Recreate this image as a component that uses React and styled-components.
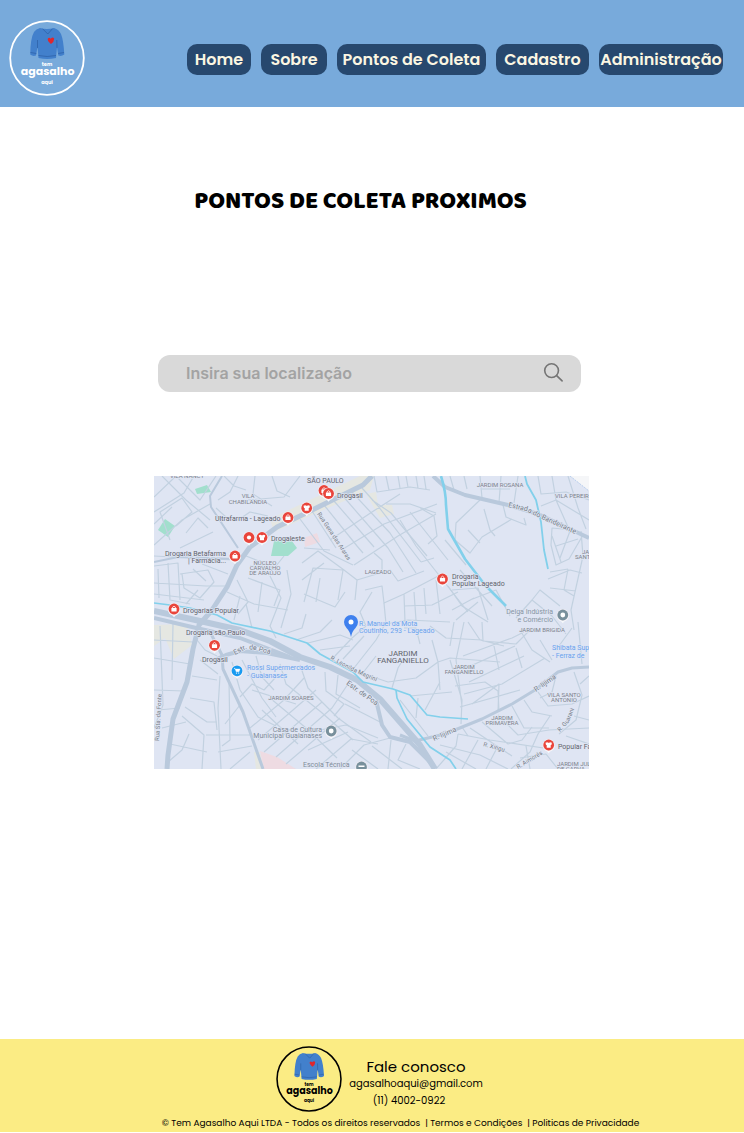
import React from "react";
import styled, { createGlobalStyle } from "styled-components";

const GlobalStyle = createGlobalStyle`
  *, *::before, *::after { box-sizing: border-box; }
  body {
    margin: 0;
    background: #ffffff;
    color: #000000;
    font-family: Poppins, Inter, "Liberation Sans", sans-serif;
  }
`;

const Header = styled.header`
  display: flex;
  align-items: flex-start;
  justify-content: space-between;
  gap: 16px;
  min-height: 107px;
  padding: 20px 21px 11px 9px;
  background: #78aadb;
`;

const LogoLink = styled.a`
  flex: none;
  line-height: 0;
`;

const Nav = styled.nav`
  display: flex;
  flex-wrap: wrap;
  justify-content: flex-end;
  gap: 10px;
  margin-top: 24px;
`;

const NavLink = styled.a`
  display: flex;
  align-items: center;
  justify-content: center;
  width: ${(p) => p.$width}px;
  height: 31px;
  border-radius: 10px;
  background: #27486e;
  color: #fbf6e2;
  font-size: 16px;
  font-weight: 600;
  white-space: nowrap;
  text-decoration: none;
`;

const Main = styled.main`
  display: flex;
  flex-direction: column;
  width: 100%;
  max-width: 436px;
  margin: 0 auto;
  padding: 79px 1px 270px 0;
`;

const Title = styled.h1`
  margin: 0;
  padding-right: 22px;
  text-align: center;
  font-family: "Baloo 2", Lato, "Open Sans", sans-serif;
  font-size: 24px;
  line-height: 32px;
  font-weight: 900;
`;

const Search = styled.form`
  display: flex;
  align-items: center;
  height: 37px;
  margin: 137px 8px 84px 4px;
  padding: 0 17px 2px 28px;
  border-radius: 12px;
  background: #d9d9d9;
`;

const SearchInput = styled.input`
  flex: 1;
  min-width: 0;
  padding: 0;
  border: 0;
  outline: 0;
  background: transparent;
  color: #555555;
  font-family: Inter, sans-serif;
  font-size: 16px;
  font-weight: 600;
  &::placeholder { color: #a3a3a3; opacity: 1; }
`;

const SearchButton = styled.button`
  display: flex;
  padding: 0;
  border: 0;
  background: none;
  color: #757575;
  cursor: pointer;
`;

const MapSvg = styled.svg`
  display: block;
  width: 100%;
  height: auto;
  font-family: Roboto, sans-serif;
`;

const Footer = styled.footer`
  display: flex;
  flex-direction: column;
  align-items: center;
  min-height: 93px;
  padding: 7px 16px 1px;
  background: #fbec84;
`;

const Contact = styled.div`
  display: flex;
  gap: 7px;
  margin-left: 15px;
`;

const ContactText = styled.address`
  display: flex;
  flex-direction: column;
  align-items: center;
  padding-top: 13px;
  font-style: normal;
  font-size: 10px;
  line-height: 17px;
`;

const ContactTitle = styled.h2`
  margin: 0;
  font-size: 15px;
  line-height: 16px;
  font-weight: 400;
`;

const PlainLink = styled.a`
  color: inherit;
  text-decoration: none;
`;

const Phone = styled(PlainLink)`
  padding-right: 14px;
`;

const Legal = styled.p`
  display: flex;
  flex-wrap: wrap;
  justify-content: center;
  margin: 4px 0 0 57px;
  font-size: 9px;
  line-height: 14px;
  white-space: pre-wrap;
`;

function Logo({ size, ink }) {
  return (
    <svg width={size} height={size} viewBox="0 0 76 76" role="img" aria-label="Tem Agasalho Aqui">
      <circle cx="38" cy="38" r="36.8" fill="none" stroke={ink} strokeWidth="1.8" />
      <path
        d="M31 8 Q38 10 45 8 Q50 9.5 52 14 Q54.5 20 55.3 34.5 Q52.5 36.8 49.3 35.5 L48 27 L47 38 Q38 40 29.5 38 L28.5 27 L27 35.5 Q24 36.8 21.2 34.5 Q21.5 18 25 12 Q27 9 31 8 Z"
        fill="#4280cc"
      />
      <path
        d="M33.5 8.7 L38.8 14 L43.5 8.7 M29.5 35.5 Q38 37.5 47 35.5 M28.5 20 L28.5 28 M47.8 20 L48 28 M21.5 32.5 L27.3 33.5 M49.2 33.5 L55 32.5"
        fill="none"
        stroke="#2f62a8"
        strokeWidth="0.8"
      />
      <path
        d="M42 24 Q38.2 21 38.8 18.8 Q40 16.8 41.7 18.8 Q43.8 16.4 45.2 18.8 Q45.2 21.7 42 24 Z"
        fill="#e0262d"
      />
      <g fill={ink} textAnchor="middle" fontFamily="Poppins, sans-serif" fontWeight="700">
        <text x="38" y="46.4" fontSize="5">tem</text>
        <text x="38.6" y="55.3" fontSize="11">agasalho</text>
        <text x="38" y="64" fontSize="5">aqui</text>
      </g>
    </svg>
  );
}

const minorRoads = [
  // north-west
  "M154 497 L176 476 M154 512 L184 493 L194 476 M162 476 L186 500 L210 520 M176 476 L200 500 L216 476",
  "M154 545 L182 520 L210 504 M170 540 L160 512 L182 498 L192 512 L176 526 M186 533 L198 518 L208 528",
  "M154 556 L210 559 L235 560 M154 524 L172 507 M180 548 L213 532 M224 476 L234 486 L246 490 M238 476 L230 492 L218 500",
  "M154 566 L178 563 L180 600 M168 563 L170 600 L190 604 M180 574 L208 570 L214 582 L200 598 L184 588 L182 574 M193 569 L206 581 M202 564 L228 574",
  "M154 583 L206 586 L226 586 M154 594 L204 600 M186 604 L198 590 M158 569 L159 598",
  "M238 520 L250 512 L268 516 M216 508 L226 517 M255 476 L253 494 L272 506 M272 476 L277 491 L290 497 M248 500 L284 497 L300 476",
  "M246 556 L264 563 L277 571 M250 566 L276 566 L284 556 M248 578 L280 590 L274 606 M237 580 L248 602 L238 614 M227 592 L254 604 L288 610",
  "M240 596 L234 620 M246 604 L252 628 M262 582 L258 612 M270 576 L281 598 L270 626 L276 638 M287 570 L291 594 L281 628",
  // Lageado
  "M300 519 L324 551 L353 565 M312 511 L336 548 M324 505 L357 546 L363 553 M334 501 L374 547 M342 495 L388 548 L403 572 M350 490 L390 533 L416 573",
  "M362 488 L378 506 L421 562 M372 500 L391 513 L427 556 M330 540 L372 512 L400 494 M343 549 L384 524 L437 504 M354 565 L398 536 L436 514",
  "M400 520 L416 546 L442 579 L468 612 M410 512 L448 560 M420 508 L434 516 L437 536 L428 544 M421 562 L434 558 M386 504 L410 504 L436 513",
  "M304 548 L330 550 M302 563 L318 551 L344 570 L357 580 L355 600 M302 580 L324 563 M304 602 L313 568 L343 570 L338 600 M304 594 L335 607 L345 592 M320 578 L316 602",
  "M357 580 L390 570 L398 581 L424 571 M365 590 L382 586 L384 603 L404 594 L442 574 M404 594 L405 622 M372 592 L360 612 L366 626 M382 570 L382 560 L374 553",
  "M384 603 L386 624 L408 620 L450 622 M404 606 L432 605 L458 592 M414 592 L416 620 M424 588 L426 614 M436 580 L440 614 M448 586 L462 606 L488 622",
  "M374 476 L377 492 L410 487 L430 490 M386 476 L389 490 M398 476 L400 488 M406 476 L408 487 M416 476 L418 488 M424 476 L426 489",
  "M445 540 L466 565 M452 590 L478 588 L488 620 M460 570 L492 606 M470 600 L496 590 L510 616 M452 610 L474 598 M456 620 L478 602",
  // north-east
  "M480 500 L456 523 L455 540 L470 553 L482 537 L512 519 M484 509 L490 530 L495 536 M503 505 L506 517 L526 525 L524 518 M480 543 L468 530",
  "M450 476 L454 490 L465 494 M464 476 L467 489 M480 476 L482 498 M501 476 L499 503 M518 476 L514 503 M482 489 L510 489 M538 476 L541 494 L566 492 L589 500",
  "M552 476 L556 500 L568 527 M568 476 L578 508 L586 529 M541 506 L556 500 L589 520 M573 530 L552 528 L551 545 L556 565 L569 559 L583 535 M556 546 L578 539 M561 562 L552 536 M570 531 L560 558",
  "M581 531 L583 556 L571 610 L574 630 M548 579 L570 570 L582 573 M550 572 L568 569 M568 569 L564 590 L574 596 M550 588 L576 591 M516 618 L532 600 L552 616 L566 634 M532 600 L540 590 L560 606",
  // south-west
  "M154 640 L193 642 M154 658 L190 664 M160 626 L163 705 L154 728 M173 624 L172 680 M154 690 L184 691 M158 710 L180 708 M162 728 L186 722 M170 744 L207 752 M168 762 L182 750 L189 734",
  "M197 640 L205 650 L217 656 M200 660 L218 674 M192 676 L217 680 M190 698 L214 702 L217 730 M185 707 L207 722 L217 722 M182 716 L204 735 L202 769 M220 676 L218 708 L221 769 M229 680 L230 740 L222 746",
  "M206 735 L250 735 M240 705 L225 724 M232 662 L240 690 L258 717 L276 726 M242 660 L262 698 L276 717 M256 656 L262 677 L274 690 M252 690 L296 704 M240 697 L252 684 L264 690 L275 678",
  "M218 752 L252 746 M230 769 L250 752 M250 728 L284 700 L304 678 M258 740 L293 710 L316 690 M264 752 L322 702 M276 757 L332 708 L348 684 M286 764 L340 718",
  "M280 664 L286 684 L321 712 L353 740 M300 665 L308 688 L338 718 L371 742 M270 698 L306 728 L337 758 M262 710 L298 744 M325 672 L326 691 L344 704 L334 716 M338 675 L336 694 L360 708 M345 704 L382 723",
  "M320 730 L346 725 L378 738 M308 750 L348 732 M316 769 L351 739 L378 744 M340 769 L364 745 L390 738 M352 750 L378 769 M372 746 L402 769 M391 740 L388 769 M406 744 L398 760 L420 769",
  // centre
  "M284 634 L302 628 L306 614 M296 640 L320 632 L332 620 M308 643 L340 635 L353 640 M320 650 L350 646 M334 657 L352 638 L366 626 M343 659 L364 636 M354 668 L376 640 L384 626 M362 674 L376 656",
  "M364 674 L388 682 L416 678 L438 662 L450 658 L500 662 M392 688 L398 668 L404 658 M410 696 L452 692 M400 700 L428 736 M418 698 L416 718 M425 710 L440 682 M438 662 L440 690 M432 640 L438 662 M450 646 L454 622",
  "M404 628 L416 628 L420 644 M430 626 L446 638 L482 640 M450 660 L462 700 L461 724 M464 622 L456 660 L462 706 M468 622 L480 640 L504 646 M482 622 L483 641 L516 644 L530 630",
  "M463 656 L512 638 L524 632 M466 668 L515 646 M469 682 L524 656 M464 694 L502 684 L545 658 M472 704 L499 684 L498 712 M455 686 L485 682 L498 691 L499 712 M460 707 L520 690 M520 630 L532 650 L550 662 M494 646 L499 670 M516 648 L522 668",
  // south-east
  "M512 706 L524 728 L549 728 M498 715 L518 735 L549 730 L589 728 M482 722 L508 744 L522 740 L532 727 M470 728 L512 756 M458 734 L490 740 L550 749 M440 745 L480 755 L508 769 M446 752 L476 769 M436 769 L456 746 L458 734",
  "M524 700 L532 712 L552 716 M538 692 L548 706 L572 704 L589 696 M556 676 L552 692 L540 698 M574 672 L582 695 L576 720 L559 734 M589 676 L580 684 M552 660 L540 640 M578 622 L582 664 M572 628 L556 650 M550 716 L538 734 L530 752 L511 769",
  "M566 736 L589 744 M520 758 L546 754 L558 769 M574 716 L589 720 M478 740 L462 769 M498 746 L486 769 M526 746 L530 769 M462 727 L468 736",
];

const arteries = [
  { d: "M372 476 L363 485 L300 516 L277 527 L250 547 L237 565 L227 587 L212 610 L199 625 L193 649 L187 682 L173 719 L168 755 L167 769", w: 5 },
  { d: "M154 611 L200 621 L240 630 L270 641 L300 657 L330 667 L357 680 L380 699 L400 722 L420 745 L435 769", w: 6 },
  { d: "M154 618 L192 627 L240 638 L290 657", w: 4 },
  { d: "M210 662 L226 655 L240 651 L267 653 L300 660", w: 4 },
  { d: "M210 632 L222 655 L223 669 L243 712 L263 769", w: 3 },
  { d: "M376 700 L382 725 L390 737 L410 742 L433 765", w: 4 },
  { d: "M433 476 L445 487 L465 495 L508 505 L538 514 L572 530 L589 538", w: 4 },
  { d: "M400 735 L415 741 L445 734 L482 719 L512 704 L535 690 L558 672 L572 668 L589 667", w: 3 },
  { d: "M154 562 L178 557 L235 559 M222 476 L210 496 L211 507 L238 548", w: 2 },
];

const rivers = [
  { d: "M154 603 L170 605 L190 608 L217 615 L232 623 L270 631 L307 643 L320 654 L353 672 L363 682 L393 689 L410 695 L427 715 L440 717 L468 719", w: 1.7 },
  { d: "M396 690 L397 698 L407 719 L430 747 L450 760 L456 769", w: 1.7 },
  { d: "M441 476 Q446 492 446 505 L448 529 L465 559 L485 585 L506 606", w: 2.6 },
  { d: "M525 476 L527 484 L536 500 L541 522 L544 550 L548 569", w: 1.8 },
];

const BLUE = "#69a2ee";
const SLATE = "#7f8c99";
const AREA = "#7d838c";

const labels = [
  { x: 307, y: 483, t: "SÃO PAULO", s: 7 },
  { x: 337, y: 498, t: "Drogasil", s: 7 },
  { x: 215, y: 521, t: "Ultrafarma - Lageado", s: 7 },
  { x: 271, y: 541, t: "Drogaleste", s: 7 },
  { x: 226, y: 556, t: "Drogaria Betafarma", s: 7, a: "end" },
  { x: 226, y: 563, t: "| Farmácia...", s: 7, a: "end" },
  { x: 183, y: 613, t: "Drogarias Popular", s: 7 },
  { x: 452, y: 579, t: "Drogaria", s: 7 },
  { x: 452, y: 586, t: "Popular Lageado", s: 7 },
  { x: 186, y: 635, t: "Drogaria são Paulo", s: 7 },
  { x: 202, y: 662, t: "Drogasil", s: 7 },
  { x: 558, y: 749, t: "Popular Fa", s: 7 },
  { x: 247, y: 670, t: "Rossi Supermercados", s: 7, c: BLUE },
  { x: 247, y: 678, t: "- Guaianases", s: 7, c: BLUE },
  { x: 359, y: 626, t: "R. Manuel da Mota", s: 7, c: BLUE },
  { x: 359, y: 633, t: "Coutinho, 293 - Lageado", s: 7, c: BLUE },
  { x: 552, y: 650, t: "Shibata Sup", s: 7, c: BLUE },
  { x: 552, y: 658, t: "- Ferraz de", s: 7, c: BLUE },
  { x: 553, y: 614, t: "Delga Indústria", s: 7, a: "end", c: "#8795a3" },
  { x: 553, y: 622, t: "e Comércio", s: 7, a: "end", c: "#8795a3" },
  { x: 322, y: 732, t: "Casa de Cultura", s: 7, a: "end", c: SLATE },
  { x: 322, y: 738, t: "Municipal Guaianases", s: 7, a: "end", c: SLATE },
  { x: 303, y: 767, t: "Escola Técnica", s: 7, c: SLATE },
  { x: 403, y: 656, t: "JARDIM", s: 8, a: "middle" },
  { x: 403, y: 663, t: "FANGANIELLO", s: 8, a: "middle" },
  { x: 187, y: 478, t: "VILA NANCY", s: 6, a: "middle", c: AREA },
  { x: 248, y: 498, t: "VILA", s: 6, a: "middle", c: AREA },
  { x: 248, y: 504, t: "CHABILANDIA", s: 6, a: "middle", c: AREA },
  { x: 265, y: 565, t: "NÚCLEO", s: 6, a: "middle", c: AREA },
  { x: 265, y: 570, t: "CARVALHO", s: 6, a: "middle", c: AREA },
  { x: 265, y: 575, t: "DE ARAÚJO", s: 6, a: "middle", c: AREA },
  { x: 378, y: 574, t: "LAGEADO", s: 6, a: "middle", c: AREA },
  { x: 500, y: 487, t: "JARDIM ROSANA", s: 6, a: "middle", c: AREA },
  { x: 555, y: 498, t: "VILA PEREIR", s: 6, c: AREA },
  { x: 582, y: 554, t: "JA", s: 6, c: AREA },
  { x: 575, y: 559, t: "SANT", s: 6, c: AREA },
  { x: 542, y: 632, t: "JARDIM BRIGIDA", s: 6, a: "middle", c: AREA },
  { x: 464, y: 669, t: "JARDIM", s: 6, a: "middle", c: AREA },
  { x: 464, y: 674, t: "FANGANIELLO", s: 6, a: "middle", c: AREA },
  { x: 564, y: 697, t: "VILA SANTO", s: 6, a: "middle", c: AREA },
  { x: 564, y: 702, t: "ANTONIO", s: 6, a: "middle", c: AREA },
  { x: 502, y: 720, t: "JARDIM", s: 6, a: "middle", c: AREA },
  { x: 502, y: 725, t: "PRIMAVERA", s: 6, a: "middle", c: AREA },
  { x: 291, y: 700, t: "JARDIM SOARES", s: 6, a: "middle", c: AREA },
  { x: 557, y: 766, t: "JARDIM JUL", s: 6, c: AREA },
  { x: 557, y: 771, t: "DE CARVA", s: 6, c: AREA },
];

const streetLabels = [
  { id: "bandeirante", d: "M508 507 L526 511 L546 521 L582 537", t: "Estrada do Bandeirante", s: 7 },
  { id: "gena", d: "M317 514 L333 538 L354 570", t: "Rua Gena das Araras", s: 6 },
  { id: "poa-oeste", d: "M235 655 L246 649 L256 650 L276 656", t: "Estr. de Poá", s: 7 },
  { id: "poa-leste", d: "M346 684 L358 693 L384 711", t: "Estr. de Poá", s: 7 },
  { id: "leonilda", d: "M330 659 L350 670 L384 685", t: "R. Leonilda Magrini", s: 6 },
  { id: "iijima-leste", d: "M536 692 L562 674", t: "R. Iijima", s: 7 },
  { id: "iijima-oeste", d: "M434 741 L464 728", t: "R. Iijima", s: 7 },
  { id: "guarani", d: "M560 732 L569 722 L578 700", t: "R. Guarani", s: 6 },
  { id: "xingu", d: "M483 746 L512 754", t: "R. Xingu", s: 6 },
  { id: "aimores", d: "M518 769 L546 752", t: "R. Aimorés", s: 6 },
  { id: "fonte", d: "M159 741 L162 688", t: "Rua Sta. da Fonte", s: 6 },
];

const pins = [
  { x: 324, y: 490.5, kind: "bag" },
  { x: 328.5, y: 493.5, kind: "bag" },
  { x: 306.7, y: 508, kind: "shirt" },
  { x: 288, y: 517.5, kind: "bag" },
  { x: 249, y: 537.5, kind: "dot" },
  { x: 262, y: 537.5, kind: "shirt" },
  { x: 235, y: 556, kind: "bag" },
  { x: 174, y: 609, kind: "bag" },
  { x: 442.5, y: 579, kind: "bag" },
  { x: 214.5, y: 645.3, kind: "bag" },
  { x: 548.7, y: 745, kind: "shirt" },
  { x: 237, y: 670.8, kind: "cart", color: "#199bf1" },
  { x: 562.8, y: 615, kind: "ring", color: "#78909c" },
  { x: 331.2, y: 731, kind: "ring", color: "#78909c" },
  { x: 361.5, y: 767, kind: "school", color: "#78909c" },
];

function PinGlyph({ kind }) {
  if (kind === "bag")
    return (
      <>
        <rect x="-2.6" y="-1" width="5.2" height="3.6" rx="0.5" fill="#fff" />
        <path d="M-1.4 -0.8 V-1.8 Q0 -3.8 1.4 -1.8 V-0.8" fill="none" stroke="#fff" strokeWidth="0.8" />
      </>
    );
  if (kind === "shirt")
    return <path d="M-3.2 -2.2 L-1.3 -2.8 Q0 -1.8 1.3 -2.8 L3.2 -2.2 L2.7 0 H2 V2.8 H-2 V0 H-2.7 Z" fill="#fff" />;
  if (kind === "cart")
    return (
      <>
        <path d="M-3 -2.4 H-2 L-0.8 1 H2 L3 -1.7 H-1.7 Z" fill="#fff" stroke="#fff" strokeWidth="0.4" />
        <circle cx="-0.5" cy="2.3" r="0.6" fill="#fff" />
        <circle cx="1.7" cy="2.3" r="0.6" fill="#fff" />
      </>
    );
  if (kind === "school") return <path d="M-3 -1.5 H3 V0 H-3 Z" fill="#fff" />;
  return <circle r={kind === "dot" ? 2.1 : 2.4} fill="#fff" />;
}

function Pin({ x, y, kind, color = "#e9453b" }) {
  return (
    <g transform={`translate(${x} ${y})`}>
      <path d="M-6.2 1 Q-5 5.5 -1.5 6.5 L0 8.3 L1.5 6.5 Q5 5.5 6.2 1 Z" fill="#f6f8fb" />
      <circle r="6.1" fill="#f3eef3" />
      <circle r="5.4" fill={color} />
      <PinGlyph kind={kind} />
    </g>
  );
}

function CollectionMap() {
  return (
    <MapSvg viewBox="154 476 435 293" role="img" aria-label="Mapa dos pontos de coleta">
      <rect x="154" y="476" width="435" height="293" fill="#dfe5f3" />
      <path d="M570 476 H589 V491 Z" fill="#f5f6f8" />
      <path d="M570 476 L589 491" stroke="#a9c4ea" strokeWidth="0.8" strokeDasharray="2 1" />
      <g fill="#e5e7e2">
        <path d="M270 519 L360 476 L374 476 L370 490 L314 514 L274 532 Z" />
        <path d="M366 494 L376 492 L378 505 L392 505 L394 514 L380 518 Z" />
        <path d="M154 625 L187 624 L192 645 L174 659 L165 638 L154 646 Z" />
        <path d="M254 752 L260 752 L264 769 L256 769 Z" />
      </g>
      <g fill="#a2dfcd">
        <path d="M165 519 L175 526 L168 537 L158 530 Z" />
        <path d="M195 489 L207 485 L211 492 L197 494 Z" />
        <path d="M274 541 L289 537 L297 548 L288 556 L271 556 Z" />
      </g>
      <g fill="#eedbe2">
        <path d="M304 538 L317 533 L320 542 L305 547 Z" />
        <path d="M260 751 L277 757 L296 769 L264 769 Z" />
      </g>
      <g fill="none" strokeLinejoin="round">
        {minorRoads.map((d) => (
          <path key={d} d={d} stroke="#c2d1e0" strokeWidth="1.2" />
        ))}
        {arteries.map((r) => (
          <path key={r.d} d={r.d} stroke="#b9c9dc" strokeWidth={r.w} />
        ))}
        {rivers.map((r) => (
          <path key={r.d} d={r.d} stroke="#82d0eb" strokeWidth={r.w} />
        ))}
      </g>
      <g stroke="#dfe5f3" strokeWidth="1.4" paintOrder="stroke" strokeLinejoin="round">
        {labels.map((l) => (
          <text key={`${l.x}-${l.y}`} x={l.x} y={l.y} fontSize={l.s} textAnchor={l.a || "start"} fill={l.c || "#5f646c"}>
            {l.t}
          </text>
        ))}
        {streetLabels.map((l) => (
          <React.Fragment key={l.id}>
            <path id={l.id} d={l.d} fill="none" stroke="none" />
            <text fontSize={l.s} fill="#747b85">
              <textPath href={`#${l.id}`}>{l.t}</textPath>
            </text>
          </React.Fragment>
        ))}
      </g>
      {pins.map((p) => (
        <Pin key={`${p.x}-${p.y}`} {...p} />
      ))}
      <path d="M351 637 Q349.8 631 346.5 628 Q344 625.5 344 622 A7 7 0 0 1 358 622 Q358 625.5 355.5 628 Q352.2 631 351 637 Z" fill="#3f80ee" />
      <circle cx="351" cy="622" r="2.5" fill="#fff" />
    </MapSvg>
  );
}

const pages = [
  { label: "Home", width: 64 },
  { label: "Sobre", width: 66 },
  { label: "Pontos de Coleta", width: 149 },
  { label: "Cadastro", width: 93 },
  { label: "Administração", width: 124 },
];

export default function App() {
  return (
    <>
      <GlobalStyle />
      <Header>
        <LogoLink href="#inicio">
          <Logo size={76} ink="#ffffff" />
        </LogoLink>
        <Nav>
          {pages.map((p) => (
            <NavLink key={p.label} href="#pagina" $width={p.width}>
              {p.label}
            </NavLink>
          ))}
        </Nav>
      </Header>
      <Main>
        <Title>PONTOS DE COLETA PROXIMOS</Title>
        <Search onSubmit={(e) => e.preventDefault()}>
          <SearchInput type="text" aria-label="Insira sua localização" placeholder="Insira sua localização" />
          <SearchButton type="submit" aria-label="Buscar">
            <svg width="21" height="21" viewBox="0 0 22 22" fill="none" stroke="currentColor" strokeWidth="1.7" strokeLinecap="round">
              <circle cx="9" cy="9" r="7.2" />
              <path d="M14.3 14.3 L20 19.8" />
            </svg>
          </SearchButton>
        </Search>
        <CollectionMap />
      </Main>
      <Footer>
        <Contact>
          <Logo size={66} ink="#000000" />
          <ContactText>
            <ContactTitle>Fale conosco</ContactTitle>
            <PlainLink href="mailto:agasalhoaqui@gmail.com">agasalhoaqui@gmail.com</PlainLink>
            <Phone href="tel:+551140020922">(11) 4002-0922</Phone>
          </ContactText>
        </Contact>
        <Legal>
          <span>© Tem Agasalho Aqui LTDA - Todos os direitos reservados  | </span>
          <PlainLink href="#termos">Termos e Condições</PlainLink>
          <span>  | </span>
          <PlainLink href="#privacidade">Politicas de Privacidade</PlainLink>
        </Legal>
      </Footer>
    </>
  );
}
